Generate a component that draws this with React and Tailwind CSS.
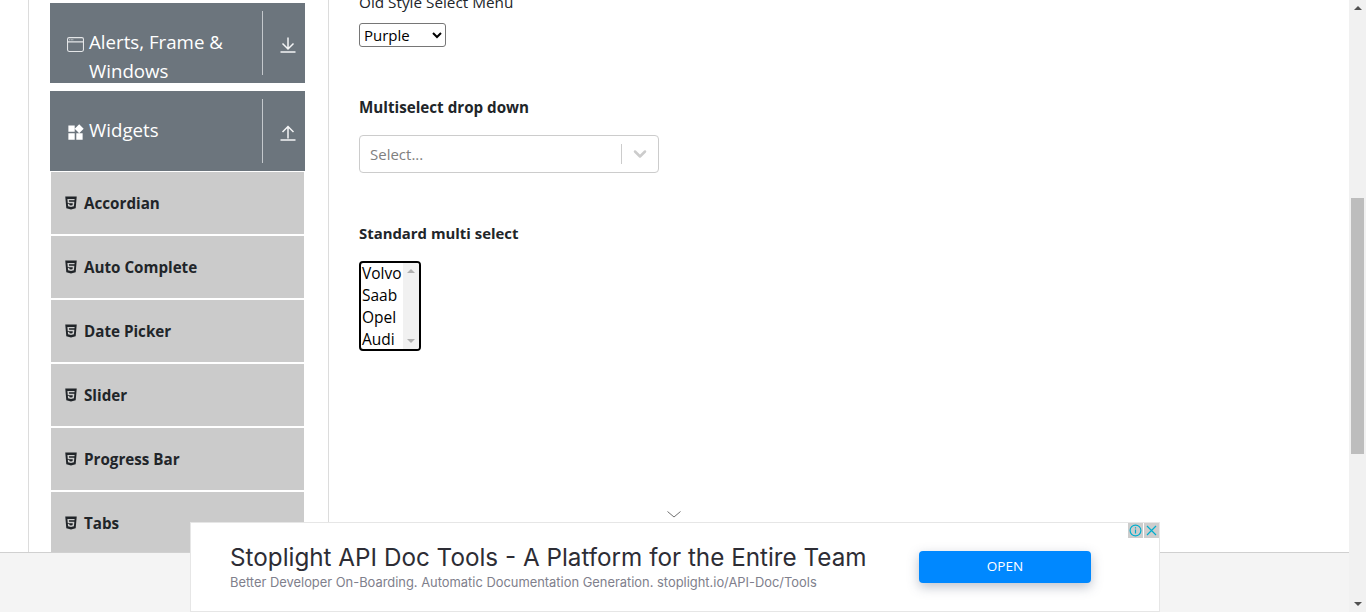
import { BsWindow } from "react-icons/bs";
import { MdWidgets } from "react-icons/md";
import { AiFillHtml5 } from "react-icons/ai";
import { FiChevronDown } from "react-icons/fi";

const items = ["Accordian", "Auto Complete", "Date Picker", "Slider", "Progress Bar", "Tabs"];
const cars = ["Volvo", "Saab", "Opel", "Audi"];

const font = "font-['Open_Sans',sans-serif]";

const ArrowBarDown = () => (
  <svg width="16" height="16" viewBox="0 0 16 16" fill="none" stroke="#f4f5f6" strokeWidth="1.5">
    <path d="M8 0.5v11.5M2.5 6.5L8 12l5.5-5.5M0.5 15h15" />
  </svg>
);

const ArrowBarUp = () => (
  <svg width="16" height="16" viewBox="0 0 16 16" fill="none" stroke="#f4f5f6" strokeWidth="1.5">
    <path d="M8 1.5v12M2.5 7L8 1.5 13.5 7M0.5 15h15" />
  </svg>
);

const GroupCard = ({ icon, title, arrow }) => (
  <div className="flex h-20 bg-[#6c757d] text-white">
    <div className="flex flex-1 pt-[24px] pl-[17px]">
      <span className="mr-[5px] mt-[9px] flex h-[17px] w-[17px] shrink-0 items-center justify-center text-[#e4e6e8]">{icon}</span>
      <span className="text-[18.7px] leading-[29px]">{title}</span>
    </div>
    <div className="my-2 flex w-[43px] items-center justify-center border-l border-[#c4c8cc] pl-[7px] pt-[3px]">
      {arrow}
    </div>
  </div>
);

const Sidebar = () => (
  <aside className="w-[301px] shrink-0 ml-[28px] border-x border-[#dcdcdc] pt-[3px] pl-[21px] pr-[23px] overflow-hidden">
    <GroupCard icon={<BsWindow className="text-[17px]" />} title={<>Alerts, Frame &amp;<br />Windows</>} arrow={<ArrowBarDown />} />
    <div className="mt-2">
      <GroupCard icon={<MdWidgets className="shrink-0 text-[19px] text-white" />} title="Widgets" arrow={<ArrowBarUp />} />
    </div>
    <ul className="mx-px mt-px flex flex-col gap-[2px]">
      {items.map((item) => (
        <li key={item} className="flex h-[62px] shrink-0 items-center gap-[5px] bg-[#cbcbcb] pl-[12px] text-[#212529]">
          <AiFillHtml5 className="text-[16px]" />
          <span className="text-[15.2px] font-bold">{item}</span>
        </li>
      ))}
    </ul>
  </aside>
);

const CarList = () => (
  <div className="mt-4 flex h-[90px] w-[62px] overflow-hidden rounded-[4px] border-2 border-black bg-white text-[15.5px] text-black">
    <ul className="-mt-px flex-1 pl-[1px] leading-[22px]">
      {cars.map((car) => (
        <li key={car}>{car}</li>
      ))}
    </ul>
    <div className="flex w-[16px] shrink-0 flex-col items-center bg-[#f1f1f1]">
      <span className="mt-[6px] h-0 w-0 border-x-[4px] border-b-[4px] border-x-transparent border-b-[#b0b0b0]"></span>
      <span className="mt-auto mb-[6px] h-0 w-0 border-x-[4px] border-t-[4px] border-x-transparent border-t-[#b0b0b0]"></span>
    </div>
  </div>
);

const Main = () => (
  <main className="flex-1 pl-[30px] text-[#212529]">
    <p className="-mt-[10px] text-[15.3px] leading-6">Old Style Select Menu</p>
    <select defaultValue="Purple" className="mt-[9px] block h-6 w-[87px] rounded-[3px] border border-[#767676] bg-white text-[15px] text-black">
      <option>Purple</option>
    </select>
    <h4 className="mt-[48px] text-[15.2px] font-bold leading-6">Multiselect drop down</h4>
    <div className="mt-4 flex h-[38px] w-[300px] items-center rounded border border-[#cccccc] bg-white">
      <span className="flex-1 pl-[10px] text-[15px] text-[#808080]">Select...</span>
      <span className="h-5 border-l border-[#cccccc]"></span>
      <FiChevronDown className="mx-[8px] text-[20px] text-[#cccccc]" strokeWidth={3} />
    </div>
    <h4 className="mt-[48px] text-[14.9px] font-bold leading-6">Standard multi select</h4>
    <CarList />
  </main>
);

const PageScrollbar = () => (
  <div className="flex w-[17px] shrink-0 flex-col items-center bg-[#f1f1f1]">
    <span className="mt-[6px] h-0 w-0 border-x-[4px] border-b-[4px] border-x-transparent border-b-[#505050]"></span>
    <span className="mt-[188px] h-[256px] w-[13px] bg-[#bdbdbd]"></span>
    <span className="mt-auto mb-[6px] h-0 w-0 border-x-[4px] border-t-[4px] border-x-transparent border-t-[#505050]"></span>
  </div>
);

const AdBanner = () => (
  <div className="absolute bottom-0 left-[190px] h-[90px] w-[970px] border border-[#e6e6e6] bg-white">
    <svg className="absolute -top-[12px] left-[476px]" width="14" height="7" viewBox="0 0 14 7" fill="none" stroke="#707070" strokeWidth="1">
      <path d="M0.5 0.5L7 6l6.5-5.5" />
    </svg>
    <div className="absolute right-0 top-0 flex gap-px">
      <span className="flex h-[15px] w-[15px] items-center justify-center bg-[#cdcdcd]">
        <svg width="13" height="13" viewBox="0 0 13 13" fill="none" stroke="#00aecd" strokeWidth="1.2">
          <circle cx="6.5" cy="6.5" r="5.4" />
          <path d="M6.5 5.5v4M6.5 3.2v1.2" />
        </svg>
      </span>
      <span className="flex h-[15px] w-[15px] items-center justify-center bg-[#cdcdcd]">
        <svg width="13" height="13" viewBox="0 0 13 13" fill="none" stroke="#00aecd" strokeWidth="1.2">
          <path d="M2 2l9 9M11 2l-9 9" />
        </svg>
      </span>
    </div>
    <div className="flex h-full items-center pl-[39px]">
      <div className="w-[689px] pt-[2px]">
        <p className="font-['Inter',sans-serif] text-[24.25px] leading-[30px] text-[#2d2d35]">Stoplight API Doc Tools - A Platform for the Entire Team</p>
        <p className="font-['Inter',sans-serif] text-[12.9px] leading-[20px] text-[#80808c]">Better Developer On-Boarding. Automatic Documentation Generation. stoplight.io/API-Doc/Tools</p>
      </div>
      <button className="mb-[1px] h-8 w-[172px] rounded bg-[#0088ff] text-[13.5px] text-white shadow-[0_4px_12px_rgba(70,80,110,0.35)]">OPEN</button>
    </div>
  </div>
);

export default function App() {
  return (
    <div className={`relative flex h-[612px] w-[1366px] overflow-hidden bg-white ${font}`}>
      <div className="flex w-[1349px] shrink-0 flex-col">
        <div className="flex h-[552px] shrink-0 overflow-hidden">
          <Sidebar />
          <Main />
        </div>
        <footer className="flex-1 border-t border-[#d0d0d0] bg-[#f4f4f4]"></footer>
      </div>
      <PageScrollbar />
      <AdBanner />
    </div>
  );
}
